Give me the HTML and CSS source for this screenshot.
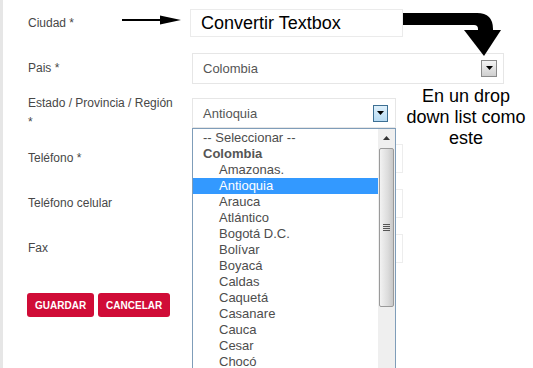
FILE: index.html
```html
<!DOCTYPE html>
<html lang="es">
<head>
<meta charset="utf-8">
<title>Formulario</title>
<link rel="stylesheet" href="styles.css">
</head>
<body>
<div class="page">
  <form class="form">
    <div class="row">
      <label class="lbl">Ciudad *</label>
      <div class="textbox">Convertir Textbox</div>
    </div>
    <div class="row">
      <label class="lbl">Pais *</label>
      <div class="select select-wide">
        <span class="select-text">Colombia</span>
        <span class="ddbtn ddbtn-gray"><svg width="7" height="4" viewBox="0 0 7 4"><polygon points="0,0 7,0 3.5,4" fill="#000"/></svg></span>
      </div>
    </div>
    <div class="row">
      <label class="lbl">Estado / Provincia / Región *</label>
      <div class="select-wrap">
        <div class="select">
          <span class="select-text">Antioquia</span>
          <span class="ddbtn ddbtn-blue"><svg width="7" height="4" viewBox="0 0 7 4"><polygon points="0,0 7,0 3.5,4" fill="#000"/></svg></span>
        </div>
        <div class="listbox">
          <ul class="options">
            <li class="opt">-- Seleccionar --</li>
            <li class="opt group">Colombia</li>
            <li class="opt sub">Amazonas.</li>
            <li class="opt sub selected">Antioquia</li>
            <li class="opt sub">Arauca</li>
            <li class="opt sub">Atlántico</li>
            <li class="opt sub">Bogotá D.C.</li>
            <li class="opt sub">Bolívar</li>
            <li class="opt sub">Boyacá</li>
            <li class="opt sub">Caldas</li>
            <li class="opt sub">Caquetá</li>
            <li class="opt sub">Casanare</li>
            <li class="opt sub">Cauca</li>
            <li class="opt sub">Cesar</li>
            <li class="opt sub">Chocó</li>
          </ul>
          <div class="scrollbar">
            <div class="sb-up"><svg width="7" height="4" viewBox="0 0 7 4"><polygon points="0,4 7,4 3.5,0" fill="#333"/></svg></div>
            <div class="sb-thumb"><span class="grip"></span></div>
          </div>
        </div>
      </div>
    </div>
    <div class="row">
      <label class="lbl">Teléfono *</label>
      <div class="input"></div>
    </div>
    <div class="row">
      <label class="lbl">Teléfono celular</label>
      <div class="input"></div>
    </div>
    <div class="row">
      <label class="lbl">Fax</label>
      <div class="input"></div>
    </div>
    <div class="actions">
      <button type="button" class="btn">GUARDAR</button>
      <button type="button" class="btn">CANCELAR</button>
    </div>
  </form>

  <svg class="annot" width="533" height="368" viewBox="0 0 533 368">
    <line x1="122" y1="20" x2="166" y2="20" stroke="#000" stroke-width="2"/>
    <polygon points="160,15.5 181,20 160,24.5" fill="#000"/>
    <path d="M403,13 H477 Q493,13 493,29 V32 H478 V29 Q478,25 474,25 H403 Z" fill="#000"/>
    <polygon points="464,30 501,30 484,56" fill="#000"/>
  </svg>
  <p class="note">En un drop<br>down list como<br>este</p>
</div>
</body>
</html>
```
FILE: styles.css
```css
html, body {
  margin: 0;
  padding: 0;
  background: #fff;
}

.page {
  position: relative;
  width: 533px;
  height: 368px;
  overflow: hidden;
  box-sizing: border-box;
  border-left: 3px solid #e6e6e6;
  font-family: "Liberation Sans", Arial, sans-serif;
}

.form {
  padding: 8px 0 0 25px;
}

.row {
  display: flex;
  align-items: center;
  height: 30px;
  margin-bottom: 15px;
}

.lbl {
  flex: 0 0 150px;
  padding-right: 14px;
  font-size: 12px;
  line-height: 19px;
  color: #474747;
}

.textbox {
  box-sizing: border-box;
  width: 213px;
  height: 28px;
  margin-left: -2px;
  border: 1px solid #ebebeb;
  padding-left: 10px;
  font-size: 18px;
  line-height: 26px;
  color: #000;
}

.select {
  box-sizing: border-box;
  width: 204px;
  height: 30px;
  border: 1px solid #e6e6e6;
  display: flex;
  align-items: center;
  justify-content: space-between;
  padding: 0 7px 0 10px;
}

.select-wide {
  width: 312px;
  height: 31px;
  padding-right: 6px;
}

.select-text {
  font-size: 13px;
  color: #555;
}

.ddbtn {
  box-sizing: border-box;
  width: 16px;
  height: 17px;
  display: flex;
  align-items: center;
  justify-content: center;
}

.ddbtn-gray {
  border: 1px solid #8a8a8a;
  background: linear-gradient(#f4f4f4, #cfcfcf);
}

.ddbtn-blue {
  width: 15px;
  border: 1px solid #3d6f93;
  background: linear-gradient(#dff0fb, #b7dbf3);
}

.select-wrap {
  position: relative;
}

.listbox {
  position: absolute;
  top: 100%;
  left: 0;
  z-index: 2;
  box-sizing: border-box;
  width: 204px;
  height: 250px;
  border: 1px solid #7f9db9;
  background: #fff;
  display: flex;
}

.options {
  list-style: none;
  margin: 0;
  padding: 1px 0 0;
  flex: 1;
}

.opt {
  height: 16px;
  line-height: 16px;
  padding-left: 10px;
  font-size: 13px;
  color: #4d4d4d;
  white-space: nowrap;
}

.group {
  font-weight: bold;
  color: #555;
}

.sub {
  padding-left: 26px;
}

.selected {
  background: #3399ff;
  color: #fff;
}

.scrollbar {
  flex: 0 0 17px;
  background: #efefef;
  display: flex;
  flex-direction: column;
  align-items: center;
}

.sb-up {
  height: 17px;
  width: 17px;
  display: flex;
  align-items: center;
  justify-content: center;
}

.sb-thumb {
  box-sizing: border-box;
  width: 15px;
  height: 159px;
  margin-top: 2px;
  border: 1px solid #9a9a9a;
  border-radius: 2px;
  background: linear-gradient(90deg, #f2f2f2, #dcdcdc 60%, #c8c8c8);
  display: flex;
  align-items: center;
  justify-content: center;
}

.grip {
  width: 7px;
  height: 7px;
  background: repeating-linear-gradient(#555 0 1px, transparent 1px 2px);
}

.input {
  box-sizing: border-box;
  width: 211px;
  height: 29px;
  border: 1px solid #ededed;
}

.actions {
  display: flex;
  gap: 4px;
  margin: 0 0 0 -1px;
  padding-top: 15px;
}

.btn {
  height: 24px;
  padding: 0 8px;
  border: 0;
  border-radius: 3px;
  background: #d00c37;
  color: #fff;
  font-family: "Liberation Sans", Arial, sans-serif;
  font-weight: bold;
  font-size: 10px;
}

.annot {
  position: absolute;
  top: 0;
  left: -3px;
  pointer-events: none;
}

.note {
  position: absolute;
  top: 86px;
  left: 397px;
  width: 132px;
  margin: 0;
  text-align: center;
  font-size: 18px;
  line-height: 21px;
  color: #000;
}
```
